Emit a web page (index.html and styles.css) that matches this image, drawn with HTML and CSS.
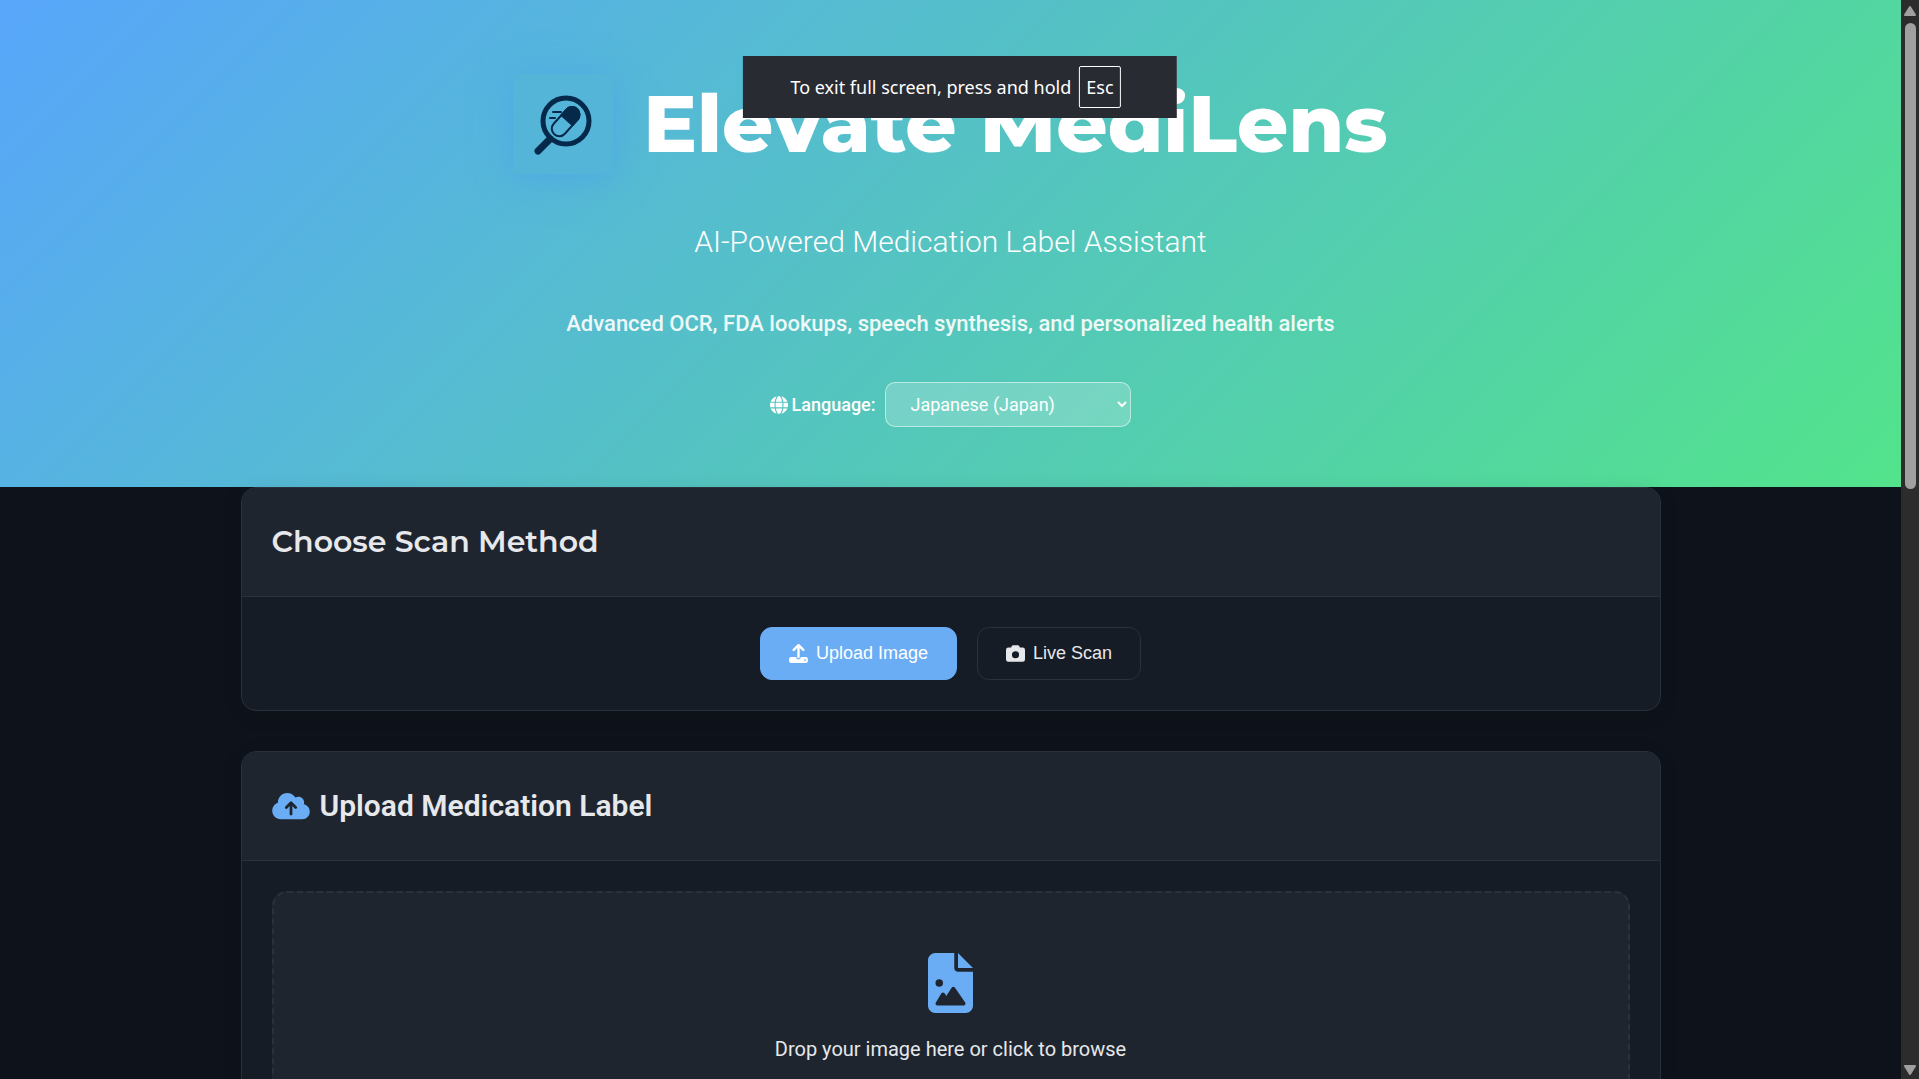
FILE: index.html
```html
<!DOCTYPE html>
<html lang="en">
<head>
  <meta charset="UTF-8" />
  <meta name="viewport" content="width=device-width, initial-scale=1.0" />
  <title>Elevate MediLens</title>
  <link rel="stylesheet" href="styles.css">
</head>
<body>

  <div class="page">
    <header class="header">
      <div class="brand">
        <div class="logo">
          <svg viewBox="0 0 100 100" width="100" height="100" aria-hidden="true">
            <circle cx="53" cy="47" r="23" fill="none" stroke="#04294a" stroke-width="5" />
            <path d="M37 65 L25 77" stroke="#04294a" stroke-width="7" stroke-linecap="round" />
            <path d="M40 38H48M37 44H42" stroke="#04294a" stroke-width="2" stroke-linecap="round" />
            <g transform="rotate(-48 53 48)">
              <rect x="36" y="40" width="34" height="15" rx="7.500" fill="none" stroke="#04294a" stroke-width="2" />
              <path d="M54 39h8.500a8.500 8.500 0 0 1 0 17h-8.500z" fill="#04294a" />
            </g>
          </svg>
        </div>
        <h1>Elevate MediLens</h1>
      </div>
      <p class="subtitle">AI-Powered Medication Label Assistant</p>
      <p class="description">Advanced OCR, FDA lookups, speech synthesis, and personalized health alerts</p>
      <div class="language">
        <label for="languageSelect">
          <svg viewBox="0 0 512 512" width="18" height="18" fill="currentColor" aria-hidden="true"><path d="M352 256c0 22.200-1.200 43.600-3.300 64H163.300c-2.200-20.400-3.300-41.800-3.300-64s1.200-43.600 3.300-64H348.700c2.200 20.400 3.300 41.800 3.300 64zm28.800-64H503.900c5.300 20.500 8.100 41.900 8.100 64s-2.800 43.500-8.100 64H380.800c2.100-20.600 3.200-42 3.200-64s-1.100-43.400-3.200-64zm112.600-32H376.700c-10-63.900-29.800-117.400-55.300-151.600c78.300 20.700 142 77.500 171.900 151.600zm-149.100 0H167.700c6.100-36.400 15.500-68.600 27-94.700c10.500-23.600 22.200-40.700 33.500-51.500C239.400 3.200 248.700 0 256 0s16.600 3.200 27.800 13.800c11.300 10.800 23 27.900 33.500 51.500c11.600 26 20.900 58.200 27 94.700zm-209 0H18.600C48.600 85.900 112.200 29.100 190.600 8.400C165.100 42.600 145.300 96.100 135.300 160zM8.100 192H131.200c-2.100 20.600-3.200 42-3.200 64s1.100 43.400 3.200 64H8.100C2.800 299.500 0 278.100 0 256s2.800-43.500 8.100-64zM194.700 446.600c-11.600-26-20.900-58.200-27-94.600H344.300c-6.100 36.400-15.500 68.600-27 94.600c-10.500 23.600-22.200 40.700-33.500 51.500C272.600 508.800 263.300 512 256 512s-16.600-3.200-27.800-13.800c-11.300-10.800-23-27.900-33.500-51.500zM135.300 352c10 63.900 29.800 117.400 55.300 151.600C112.200 482.900 48.600 426.100 18.600 352H135.300zm358.100 0c-30 74.100-93.600 130.900-171.900 151.600c25.500-34.200 45.200-87.700 55.300-151.600H493.400z"/></svg>
          Language:
        </label>
        <select id="languageSelect">
          <option>English (US)</option>
          <option selected>Japanese (Japan)</option>
        </select>
      </div>
    </header>

    <main class="container">
      <section class="card">
        <div class="card-header">
          <h2 class="display">Choose Scan Method</h2>
        </div>
        <div class="card-body methods">
          <button type="button" class="btn btn-primary">
            <svg viewBox="0 0 512 512" width="19" height="19" fill="currentColor" aria-hidden="true"><path fill-rule="evenodd" d="M288 109v243a32 32 0 0 1-64 0V109l-73 74a32 32 0 0 1-46-46L233 9a32 32 0 0 1 46 0l128 128a32 32 0 0 1-46 46zM64 352h128a64 64 0 0 0 128 0h128a64 64 0 0 1 64 64v32a64 64 0 0 1-64 64H64a64 64 0 0 1-64-64v-32a64 64 0 0 1 64-64zm368 104a24 24 0 1 0 0-48 24 24 0 0 0 0 48z"/></svg>
            Upload Image
          </button>
          <button type="button" class="btn btn-outline">
            <svg viewBox="0 0 512 512" width="19" height="19" fill="currentColor" aria-hidden="true"><path fill-rule="evenodd" d="M149 65l-10 31H64a64 64 0 0 0-64 64v256a64 64 0 0 0 64 64h384a64 64 0 0 0 64-64V160a64 64 0 0 0-64-64h-75l-10-31a48 48 0 0 0-46-33H195a48 48 0 0 0-46 33zM256 192a96 96 0 1 1 0 192 96 96 0 0 1 0-192z"/></svg>
            Live Scan
          </button>
        </div>
      </section>

      <section class="card">
        <div class="card-header">
          <h2>
            <svg class="accent" viewBox="0 0 640 512" width="38" height="30" fill="currentColor" aria-hidden="true"><path fill-rule="evenodd" d="M144 480C64.500 480 0 415.500 0 336c0-62.800 40.200-116.200 96.200-135.900c-.1-2.700-.2-5.400-.2-8.100c0-88.400 71.600-160 160-160c59.300 0 111 32.200 138.700 80.200C409.900 102 428.300 96 448 96c53 0 96 43 96 96c0 12.200-2.300 23.800-6.400 34.600C596 238.400 640 290.100 640 352c0 70.700-57.300 128-128 128H144zm79-217a24 24 0 0 0 34 34l39-39v134a24 24 0 0 0 48 0V258l39 39a24 24 0 0 0 34-34l-80-80a24 24 0 0 0-34 0z"/></svg>
            Upload Medication Label
          </h2>
        </div>
        <div class="card-body">
          <label class="dropzone" for="fileInput">
            <svg class="accent" viewBox="0 0 384 512" width="45" height="60" fill="currentColor" aria-hidden="true"><path fill-rule="evenodd" d="M64 0C28.700 0 0 28.700 0 64v384c0 35.300 28.700 64 64 64h256c35.300 0 64-28.700 64-64V160H256c-17.700 0-32-14.300-32-32V0zm192 0v128h128zM64 256a32 32 0 1 1 64 0 32 32 0 0 1-64 0zm152 32c5.300 0 10.200 2.600 13.200 6.900l88 128a16 16 0 0 1-13.200 25.100H80a16 16 0 0 1-13.900-24l48-80a16 16 0 0 1 27.700 0l14.100 22.400 46.900-71.500c3-4.300 7.900-6.900 13.200-6.900z"/></svg>
            <span>Drop your image here or click to browse</span>
            <input type="file" id="fileInput" accept="image/*">
          </label>
        </div>
      </section>
    </main>
  </div>

  <div class="toast" role="status">
    To exit full screen, press and hold <kbd>Esc</kbd>
  </div>

  <div class="scrollbar" aria-hidden="true">
    <svg viewBox="0 0 12 10" width="12" height="10"><path d="M6 1L11 9H1z" fill="#a0a0a0" stroke="#a0a0a0" stroke-width="2" stroke-linejoin="round" /></svg>
    <div class="track"><div class="thumb"></div></div>
    <svg viewBox="0 0 12 10" width="12" height="10"><path d="M6 9L11 1H1z" fill="#a0a0a0" stroke="#a0a0a0" stroke-width="2" stroke-linejoin="round" /></svg>
  </div>

</body>
</html>
```

FILE: styles.css
```css
* {
  box-sizing: border-box;
}

body {
  margin: 0;
  height: 100vh;
  overflow: hidden;
  background: #0e121a;
  color: #e6e8eb;
  font-family: Roboto, sans-serif;
}

h1,
h2,
p {
  margin: 0;
}

.page {
  margin-right: 18px;
}

/* Header */
.header {
  display: flex;
  flex-direction: column;
  align-items: center;
  padding: 74px 20px 60px;
  background: linear-gradient(135deg, #58a6fb 0%, #54c4c0 50%, #52e38b 100%);
  color: #fff;
  text-align: center;
}

.brand {
  display: flex;
  align-items: center;
  gap: 30px;
  margin-bottom: 44px;
}

.logo {
  width: 100px;
  height: 100px;
  background: #54b5d8;
  box-shadow: 0 4px 32px rgba(74, 160, 236, 0.6);
}

.logo svg {
  display: block;
}

h1 {
  font-family: Montserrat, Inter, sans-serif;
  font-size: 80px;
  font-weight: 800;
  line-height: 100px;
}

.subtitle {
  margin-bottom: 40px;
  font-size: 30px;
  font-weight: 300;
  line-height: 48px;
}

.description {
  margin-bottom: 40px;
  font-size: 22px;
  font-weight: 500;
  line-height: 36px;
  opacity: 0.9;
}

.language {
  display: flex;
  align-items: center;
  gap: 10px;
}

.language label {
  display: flex;
  align-items: center;
  gap: 4px;
  font-size: 18px;
  font-weight: 500;
}

select {
  width: 246px;
  height: 45px;
  padding: 0 20px;
  border: 1px solid rgba(255, 255, 255, 0.5);
  border-radius: 10px;
  background: rgba(255, 255, 255, 0.2);
  color: #fff;
  font-family: Roboto, sans-serif;
  font-size: 18px;
}

/* Cards */
.container {
  max-width: 1420px;
  margin: 0 auto;
}

.card {
  margin-bottom: 40px;
  overflow: hidden;
  border: 1px solid #2b313c;
  border-radius: 15px;
  background: #161c26;
  box-shadow: 0 4px 20px rgba(0, 0, 0, 0.1);
}

.card-header {
  padding: 30px;
  border-bottom: 1px solid #2b313c;
  background: #1f252f;
}

h2 {
  display: flex;
  align-items: center;
  gap: 10px;
  font-size: 30px;
  font-weight: 600;
  line-height: 48px;
}

.display {
  font-family: Montserrat, Inter, sans-serif;
}

.card-body {
  padding: 30px;
}

.methods {
  display: flex;
  justify-content: center;
  gap: 20px;
}

.btn {
  display: flex;
  align-items: center;
  gap: 8px;
  height: 53px;
  padding: 0 28px;
  border: 1px solid #2b313c;
  border-radius: 12px;
  background: transparent;
  color: #e6e8eb;
  font-family: "Liberation Sans", Arial, sans-serif;
  font-size: 18px;
}

.btn-primary {
  border-color: #6aadf5;
  background: #6aadf5;
  color: #fff;
}

.accent {
  color: #6aadf5;
}

.dropzone {
  display: flex;
  flex-direction: column;
  align-items: center;
  gap: 20px;
  padding: 60px 40px;
  border: 2px dashed #2b313c;
  border-radius: 15px;
  background: #1f252f;
  font-size: 20px;
  line-height: 32px;
}

.dropzone input {
  display: none;
}

/* Full screen notice */
.toast {
  position: fixed;
  top: 56px;
  left: 50%;
  display: flex;
  align-items: center;
  gap: 8px;
  height: 62px;
  padding: 0 56px 0 48px;
  transform: translateX(-50%);
  background: #292b33;
  color: #fff;
  font-family: "Segoe UI", "Noto Sans", sans-serif;
  font-size: 18px;
  white-space: nowrap;
}

kbd {
  padding: 0 6px;
  border: 1px solid #fff;
  border-radius: 2px;
  font-family: inherit;
  font-size: 18px;
  line-height: 40px;
}

/* Scrollbar */
.scrollbar {
  position: fixed;
  top: 0;
  right: 0;
  bottom: 0;
  display: flex;
  flex-direction: column;
  align-items: center;
  gap: 7px;
  width: 18px;
  padding: 6px 0 4px;
  background: #2c2c2c;
}

.track {
  flex: 1;
}

.thumb {
  width: 11px;
  height: 45%;
  border-radius: 6px;
  background: #a0a0a0;
}
```
